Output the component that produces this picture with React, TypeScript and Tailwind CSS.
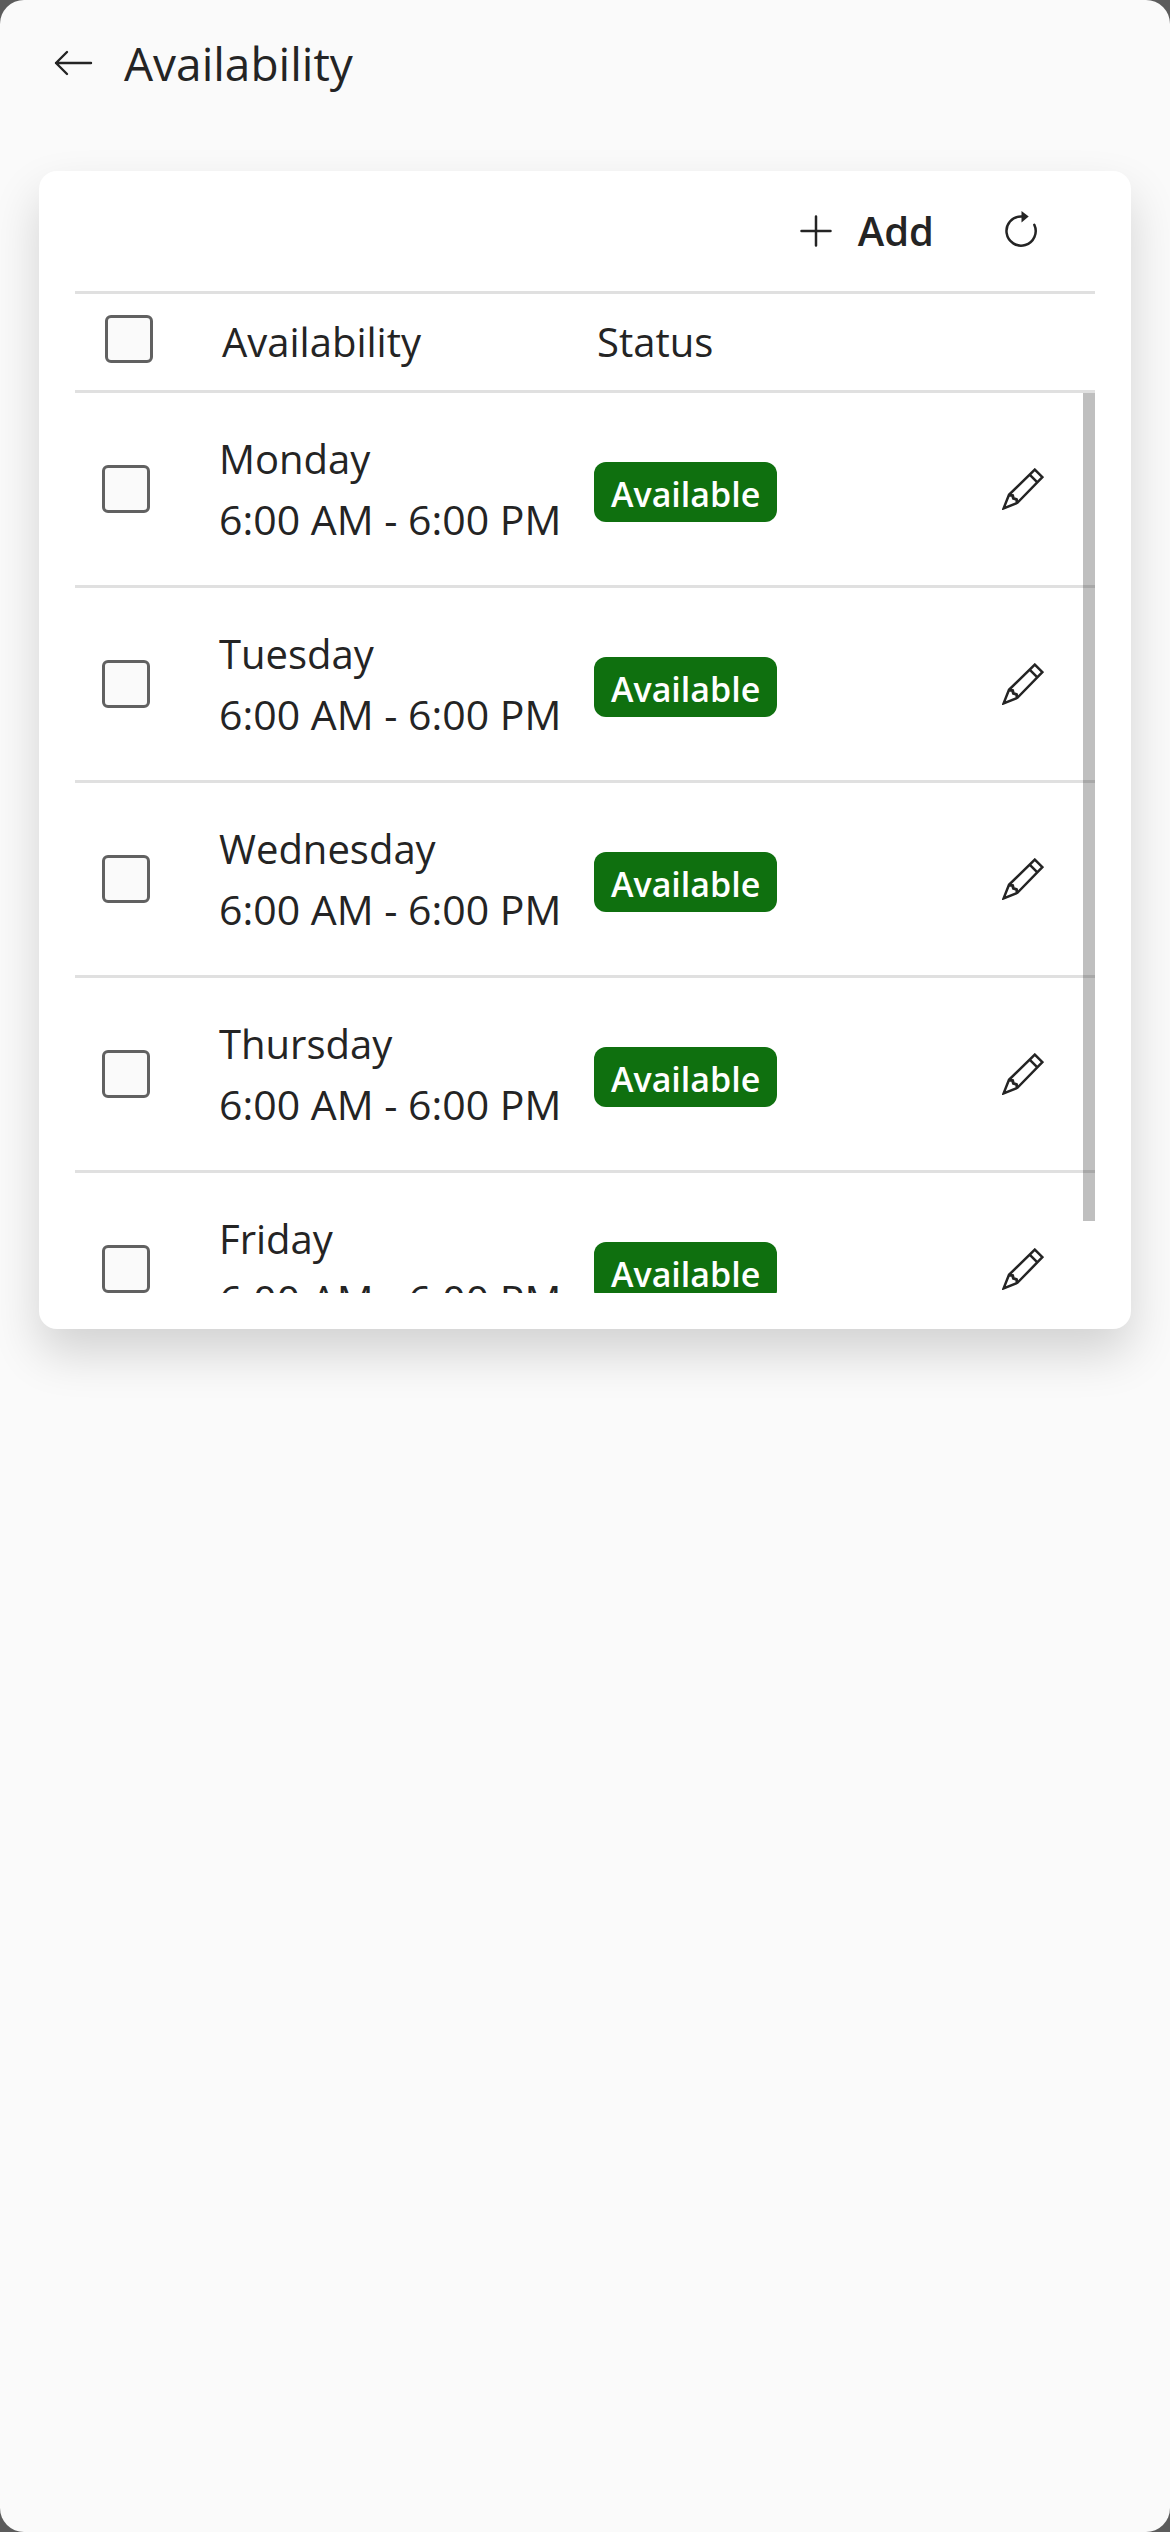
import { useState } from "react";

const days = ["Monday", "Tuesday", "Wednesday", "Thursday", "Friday"];
const hours = "6:00 AM - 6:00 PM";

export default function App() {
  const [selected, setSelected] = useState<string[]>([]);
  const [scrollTop, setScrollTop] = useState(0);

  function toggle(day: string) {
    setSelected(selected.includes(day) ? selected.filter((d) => d !== day) : [...selected, day]);
  }

  return (
    <div className="min-h-screen bg-[#5c5c5c] flex font-['Open_Sans',sans-serif] text-[#242424]">
      <main className="flex-1 min-w-0 bg-[#fafafa] rounded-3xl">
        <header className="h-[126px] flex items-center gap-[30px] pl-[52px]">
          <button aria-label="Back">
            <BackIcon />
          </button>
          <h1 className="text-[46px] leading-[64px]">Availability</h1>
        </header>

        <section className="mt-[45px] mx-[39px] px-9 pb-9 bg-white rounded-[18px] shadow-[0_24px_48px_rgba(0,0,0,0.16)]">
          <div className="h-[120px] flex items-center justify-end gap-[66px] pr-[53px]">
            <button className="flex items-center gap-6 text-[40px] leading-[60px] font-semibold">
              <PlusIcon />
              Add
            </button>
            <button aria-label="Refresh">
              <RefreshIcon />
            </button>
          </div>

          <div className="relative">
            <table className="block text-[40px] leading-[60px]">
              <thead className="block border-y-[3px] border-[#e0e0e0]">
                <tr className="h-24 pl-[3px] grid grid-cols-[144px_375px_1fr] items-center text-left">
                  <th className="pl-[27px] pb-[6px]">
                    <Checkbox
                      label="Select all"
                      checked={selected.length === days.length}
                      onChange={() => setSelected(selected.length === days.length ? [] : days)}
                    />
                  </th>
                  <th className="font-normal">Availability</th>
                  <th className="font-normal">Status</th>
                </tr>
              </thead>
              <tbody
                className="block h-[900px] overflow-y-auto [scrollbar-width:none]"
                onScroll={(e) => setScrollTop(e.currentTarget.scrollTop)}
              >
                {days.map((day) => (
                  <tr
                    key={day}
                    className="h-[195px] grid grid-cols-[144px_375px_1fr_auto] items-center border-b-[3px] border-[#e0e0e0]"
                  >
                    <td className="pl-[27px]">
                      <Checkbox label={`Select ${day}`} checked={selected.includes(day)} onChange={() => toggle(day)} />
                    </td>
                    <td className="whitespace-nowrap">
                      <div>{day}</div>
                      <div className="text-[41px]">{hours}</div>
                    </td>
                    <td className="flex pt-[6px]">
                      <span className="pt-1 px-[17px] rounded-xl bg-[#0f700f] text-white text-[34px] leading-[56px] font-semibold">
                        Available
                      </span>
                    </td>
                    <td className="pr-[51px]">
                      <button aria-label={`Edit ${day}`} className="block">
                        <PencilIcon />
                      </button>
                    </td>
                  </tr>
                ))}
              </tbody>
            </table>
            <div
              className="absolute right-0 top-[102px] w-3 h-[828px] bg-black/25"
              style={{ transform: `translateY(${scrollTop * 0.92}px)` }}
            />
          </div>
        </section>
      </main>
    </div>
  );
}

function Checkbox({ label, checked, onChange }: { label: string; checked: boolean; onChange: () => void }) {
  return (
    <input
      type="checkbox"
      aria-label={label}
      checked={checked}
      onChange={onChange}
      className="block appearance-none size-12 rounded-md border-[3px] border-[#616161] bg-[#fafafa] checked:bg-[#0f6cbd] checked:border-[#0f6cbd]"
    />
  );
}

function BackIcon() {
  return (
    <svg width="42" height="42" viewBox="0 0 42 42" fill="none" stroke="currentColor" strokeWidth="2.4" strokeLinecap="round" strokeLinejoin="round">
      <path d="M15 10 4 21l11 11M4 21h35" />
    </svg>
  );
}

function PlusIcon() {
  return (
    <svg width="36" height="36" viewBox="0 0 36 36" fill="none" stroke="currentColor" strokeWidth="2.5" strokeLinecap="round">
      <path d="M18 3.5v29M3.5 18h29" />
    </svg>
  );
}

function RefreshIcon() {
  return (
    <svg className="block" width="42" height="42" viewBox="0 0 42 42" fill="none" stroke="currentColor" strokeWidth="2.5" strokeLinecap="round">
      <path d="M34.3 14.8A14.6 14.6 0 1 1 21 6.4h2" />
      <path d="M21.5 1v11.5l7.2-6z" fill="currentColor" stroke="none" />
    </svg>
  );
}

function PencilIcon() {
  return (
    <svg width="42" height="42" viewBox="0 0 42 42" fill="none" stroke="currentColor" strokeWidth="2.5" strokeLinejoin="miter">
      <path d="M1.6 40.4 7 26.8 32.8 1.6l7.6 7.6L15.4 34.8z" />
      <path d="m27.6 6.6 7.8 7.8" />
      <path d="m7 27 3.6.6.8 2.8 3 1 1 3.4" strokeWidth="3" />
    </svg>
  );
}
